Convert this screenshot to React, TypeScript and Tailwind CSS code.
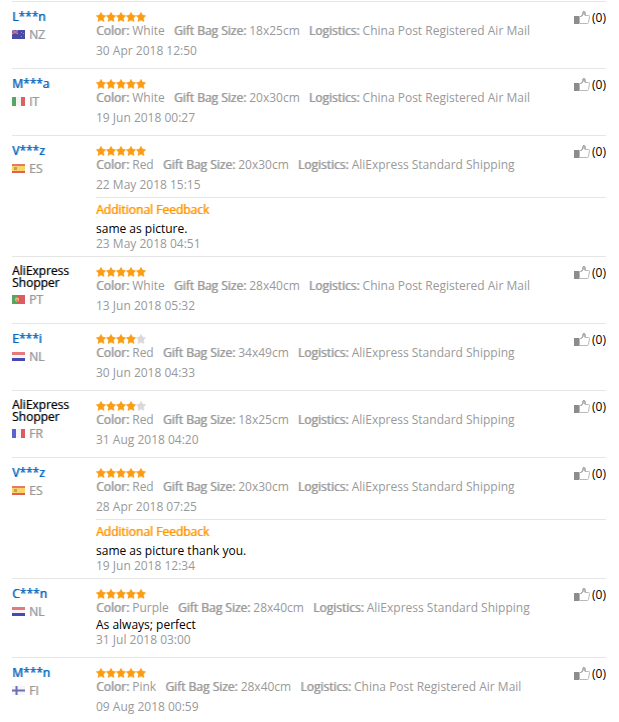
import type { ReactNode } from "react";

interface Review {
  name: string;
  anonymous?: boolean;
  country: string;
  stars: number;
  color: string;
  size: string;
  logistics: string;
  comment?: string;
  date: string;
  additional?: { text: string; date: string };
}

const AIR = "China Post Registered Air Mail";
const STANDARD = "AliExpress Standard Shipping";

const reviews: Review[] = [
  { name: "L***n", country: "NZ", stars: 5, color: "White", size: "18x25cm", logistics: AIR, date: "30 Apr 2018 12:50" },
  { name: "M***a", country: "IT", stars: 5, color: "White", size: "20x30cm", logistics: AIR, date: "19 Jun 2018 00:27" },
  {
    name: "V***z",
    country: "ES",
    stars: 5,
    color: "Red",
    size: "20x30cm",
    logistics: STANDARD,
    date: "22 May 2018 15:15",
    additional: { text: "same as picture.", date: "23 May 2018 04:51" },
  },
  { name: "AliExpress Shopper", anonymous: true, country: "PT", stars: 5, color: "White", size: "28x40cm", logistics: AIR, date: "13 Jun 2018 05:32" },
  { name: "E***i", country: "NL", stars: 4, color: "Red", size: "34x49cm", logistics: STANDARD, date: "30 Jun 2018 04:33" },
  { name: "AliExpress Shopper", anonymous: true, country: "FR", stars: 4, color: "Red", size: "18x25cm", logistics: STANDARD, date: "31 Aug 2018 04:20" },
  {
    name: "V***z",
    country: "ES",
    stars: 5,
    color: "Red",
    size: "20x30cm",
    logistics: STANDARD,
    date: "28 Apr 2018 07:25",
    additional: { text: "same as picture thank you.", date: "19 Jun 2018 12:34" },
  },
  { name: "C***n", country: "NL", stars: 5, color: "Purple", size: "28x40cm", logistics: STANDARD, comment: "As always; perfect", date: "31 Jul 2018 03:00" },
  { name: "M***n", country: "FI", stars: 5, color: "Pink", size: "28x40cm", logistics: AIR, date: "09 Aug 2018 00:59" },
];

const flags: Record<string, ReactNode> = {
  NZ: (
    <>
      <rect width="13" height="9" fill="#4a4aa6" />
      <path d="M0 0l6 4M6 0L0 4" stroke="#c9a3bd" strokeWidth="1" />
      <path d="M3 0v4M0 2h6" stroke="#d2667c" strokeWidth="1" />
      <path d="M9 2h1v1H9zM11 3h1v1h-1zM9 6h1v1H9z" fill="#b07aa8" />
    </>
  ),
  IT: (
    <>
      <rect width="13" height="9" fill="#f4f4f2" />
      <rect width="4" height="9" fill="#55a566" />
      <rect x="9" width="4" height="9" fill="#dd6067" />
    </>
  ),
  ES: (
    <>
      <rect width="13" height="9" fill="#f7d568" />
      <rect width="13" height="2" fill="#e07a6c" />
      <rect y="7" width="13" height="2" fill="#dc6258" />
      <rect x="2" y="3" width="3" height="3" fill="#d09a58" />
    </>
  ),
  PT: (
    <>
      <rect width="13" height="9" fill="#de5b61" />
      <rect width="5" height="9" fill="#5ba560" />
      <circle cx="5" cy="4.5" r="2" fill="#ecc568" />
      <rect x="4" y="4" width="2" height="2" fill="#e88a78" />
    </>
  ),
  NL: (
    <>
      <rect width="13" height="9" fill="#f6f4f6" />
      <rect width="13" height="3" fill="#e47a7c" />
      <rect y="6" width="13" height="3" fill="#4449b4" />
    </>
  ),
  FR: (
    <>
      <rect width="13" height="9" fill="#f6f4f6" />
      <rect width="4" height="9" fill="#5a62d0" />
      <rect x="9" width="4" height="9" fill="#de5b61" />
    </>
  ),
  FI: (
    <>
      <rect width="13" height="9" fill="#f5f5fa" />
      <path d="M4.5 0v9M0 4.5h13" stroke="#6a70b0" strokeWidth="2" />
    </>
  ),
};

function Stars({ count }: { count: number }) {
  return (
    <div className="flex h-[10px]" role="img" aria-label={`${count} out of 5 stars`}>
      {[1, 2, 3, 4, 5].map((n) => (
        <svg key={n} width="10" height="10" viewBox="0 0 10 10" className={n <= count ? "text-[#fb9c13]" : "text-[#d9d9d9]"}>
          <path
            d="M5 .3 6.5 3.1 9.7 3.7 7.5 6.1 8 9.5 5 8.1 2 9.5 2.5 6.1.3 3.7 3.5 3.1Z"
            fill="currentColor"
            stroke="currentColor"
            strokeWidth=".5"
            strokeLinejoin="round"
          />
        </svg>
      ))}
    </div>
  );
}

function ThumbIcon() {
  return (
    <svg width="16" height="13" viewBox="0 0 16 13" aria-hidden="true">
      <rect x="0" y="5" width="5" height="8" fill="#8c8c8c" />
      <path
        d="M5.5 5.5h2L9 3.2V1.2c0-1 2-.9 2 .3v3h3.7c.7 0 .9.5.8 1.1l-1 5.7c-.1.7-.5 1.2-1.2 1.2H5.5Z"
        fill="#fff"
        stroke="#b8b8b8"
      />
      <path d="M7.2 5.5 9 3.2V1.2c0-1 2-.9 2 .3v2.7" fill="none" stroke="#8f8f8f" />
    </svg>
  );
}

function Spec({ label, value }: { label: string; value: string }) {
  return (
    <span>
      <b className="font-normal [text-shadow:1px_0_#999999b0]">{label}:</b> {value}
    </span>
  );
}

function ReviewRow({ review }: { review: Review }) {
  const { comment, additional } = review;
  return (
    <li className="flex border-t border-[#e6e6e6]">
      <div className="w-[84px] shrink-0 pt-2">
        {review.anonymous ? (
          <p className="w-16 leading-3 text-black [text-shadow:1px_0_#00000060]">{review.name}</p>
        ) : (
          <a href="#" className="block leading-[14px] text-[#0066bf] [text-shadow:1px_0_#0066bfb0]">
            {review.name}
          </a>
        )}
        <div className="mt-[3px] flex items-center gap-1 leading-[15px] [text-shadow:1px_0_#99999980]">
          <svg width="13" height="9" viewBox="0 0 13 9" aria-hidden="true">
            {flags[review.country]}
          </svg>
          {review.country}
        </div>
      </div>
      <div className={`min-w-0 flex-1 leading-[15px] ${additional ? "pb-[5px]" : "pb-[10px]"}`}>
        <div className="flex justify-between">
          <div className="pt-[10px]">
            <Stars count={review.stars} />
            <p className="mt-px flex flex-wrap gap-x-[9px]">
              <Spec label="Color" value={review.color} />
              <Spec label="Gift Bag Size" value={review.size} />
              <Spec label="Logistics" value={review.logistics} />
            </p>
          </div>
          <button type="button" aria-label="Helpful (0)" className="flex items-center gap-[2px] self-start pt-2 text-black">
            <ThumbIcon />
            <span>(0)</span>
          </button>
        </div>
        {comment && <p className="mt-[2px] text-black">{comment}</p>}
        <p className={comment ? "" : "mt-[5px]"}>{review.date}</p>
        {additional && (
          <div className="mt-[5px] border-t border-[#e6e6e6] pt-1">
            <h3 className="font-normal text-[#ff9900] [text-shadow:1px_0_#ff9900b0]">Additional Feedback</h3>
            <p className="mt-1 text-black">{additional.text}</p>
            <p>{additional.date}</p>
          </div>
        )}
      </div>
    </li>
  );
}

export default function App() {
  return (
    <main className="min-h-screen bg-white pt-px pr-[13px] pl-3 font-['Open_Sans','Noto_Sans',sans-serif] text-[12px] text-[#999999]">
      <ul>
        {reviews.map((review, i) => (
          <ReviewRow key={i} review={review} />
        ))}
      </ul>
    </main>
  );
}
